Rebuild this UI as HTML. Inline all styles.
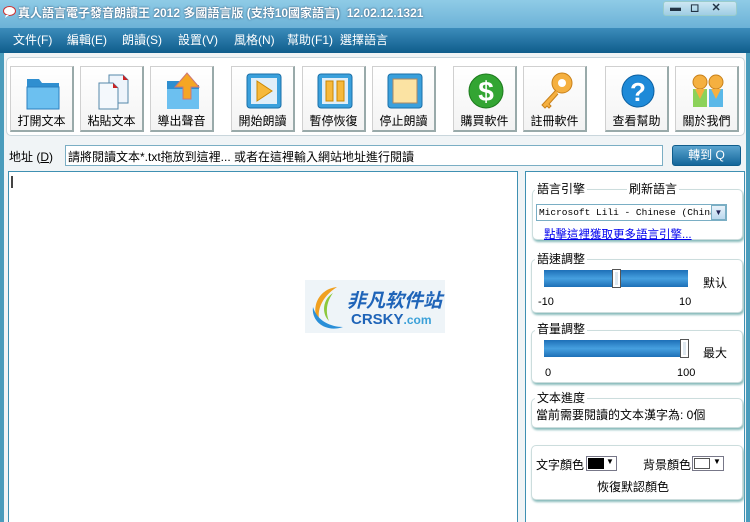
<!DOCTYPE html><html><head><meta charset="utf-8"><style>
*{margin:0;padding:0;box-sizing:border-box}
body{width:750px;height:522px;overflow:hidden;background:#4a9cbc;font-family:"Liberation Sans","Noto Sans CJK TC",sans-serif;font-size:12px;color:#000;position:relative}
.a{position:absolute;white-space:nowrap}
#title{left:0;top:0;width:750px;height:28px;background:linear-gradient(#8fcbe6,#6cb2d7);color:#fff;font-weight:bold;font-size:12px;line-height:26px;padding-left:18px;text-shadow:0 0 2px #246}
#menu{left:0;top:28px;width:750px;height:25px;background:linear-gradient(#3c8cbb,#0f5d8c);color:#fff;font-size:12px;line-height:24px}
#menu span{position:absolute;top:0}
#client{left:4px;top:53px;width:742px;height:469px;background:#f0f4f6}
.tb{left:6px;top:57px;width:739px;height:79px;border:1px solid #c9d6dc;border-radius:5px;background:#fff}
.btn{position:absolute;top:66px;width:64px;height:66px;background:linear-gradient(#fff,#f3f3f3);border:1px solid #d0d0d0;border-right:2px solid #9aa;border-bottom:2px solid #9aa;text-align:center;font-size:12px}
.btn svg{position:absolute;left:14px;top:4px}
.btn b{position:absolute;left:0;right:0;top:45px;font-weight:normal}
.grp{position:absolute;border:1px solid #cdd;border-radius:5px;background:#fff;box-shadow:1px 2px 2px #8bb}
.lbl{position:absolute;background:#fff;padding:0 2px;font-size:12px}
.sl{position:absolute;height:17px;background:linear-gradient(#1d6fb7,#46a0df 50%,#1d6fb7)}
.th{position:absolute;width:9px;height:19px;border:1px solid #555;background:#dfe8ef;box-shadow:inset 0 0 0 2px #fff}
</style></head><body>
<div class="a" id="title"><svg class="a" style="left:3px;top:6px" width="13" height="12"><ellipse cx="6.5" cy="5" rx="6" ry="4.5" fill="#fff" stroke="#c33"/><path d="M3 9 L2 12 L6 9z" fill="#fff"/></svg>真人語言電子發音朗讀王 2012 多國語言版 (支持10國家語言)&nbsp; 12.02.12.1321</div>
<div class="a" style="left:663px;top:1px;width:74px;height:15px;border:1px solid #9cc;border-radius:3px;background:linear-gradient(#cde7f3,#9fcde4)"></div>
<div class="a" style="left:670px;top:1px;color:#234;font-size:11px;font-weight:bold">▬&nbsp;&nbsp;&nbsp;◻&nbsp;&nbsp;&nbsp;&nbsp;✕</div>
<div class="a" id="menu"><span style="left:13px">文件(F)</span><span style="left:67px">編輯(E)</span><span style="left:122px">朗讀(S)</span><span style="left:178px">設置(V)</span><span style="left:234px">風格(N)</span><span style="left:287px">幫助(F1)</span><span style="left:340px">選擇語言</span></div>
<div class="a" id="client"></div>
<div class="a tb"></div>
<div class="btn" style="left:10px"><svg width="36" height="40"><path d="M2 8h12l3 4h17v26H2z" fill="#2f8fd0"/><path d="M2 16h32v22H2z" fill="#6cc0f0" stroke="#2a7fbf"/></svg><b>打開文本</b></div>
<div class="btn" style="left:80px"><svg width="36" height="40"><path d="M14 4h14l5 5v23H14z" fill="#eef4fb" stroke="#5588aa"/><path d="M4 12h14l5 5v21H4z" fill="#f4f8fc" stroke="#5588aa"/><path d="M18 12l5 5h-5z M28 4l5 5h-5z" fill="#c22"/></svg><b>粘貼文本</b></div>
<div class="btn" style="left:150px"><svg width="40" height="40"><path d="M2 10h12l3 4h17v24H2z" fill="#2f8fd0"/><path d="M2 18h32v20H2z" fill="#6cc0f0"/><path d="M16 16h8v12h8V16h8L28 2z" transform="translate(-6 0)" fill="#f5a623" stroke="#c77"/></svg><b>導出聲音</b></div>
<div class="btn" style="left:231px"><svg width="36" height="40"><rect x="1" y="3" width="34" height="34" rx="3" fill="#3aa0dc" stroke="#1a6fa8"/><rect x="5" y="7" width="26" height="26" fill="#e0eef8"/><path d="M11 10l15 10-15 10z" fill="#f6b93b" stroke="#c80"/></svg><b>開始朗讀</b></div>
<div class="btn" style="left:302px"><svg width="36" height="40"><rect x="1" y="3" width="34" height="34" rx="3" fill="#3aa0dc" stroke="#1a6fa8"/><rect x="5" y="7" width="26" height="26" fill="#e0eef8"/><rect x="9" y="10" width="7" height="20" fill="#f6b93b" stroke="#c80"/><rect x="20" y="10" width="7" height="20" fill="#f6b93b" stroke="#c80"/></svg><b>暫停恢復</b></div>
<div class="btn" style="left:372px"><svg width="36" height="40"><rect x="1" y="3" width="34" height="34" rx="3" fill="#3aa0dc" stroke="#1a6fa8"/><rect x="6" y="8" width="24" height="24" fill="#fbe3a3" stroke="#a86"/></svg><b>停止朗讀</b></div>
<div class="btn" style="left:453px"><svg width="40" height="40"><circle cx="18" cy="20" r="17" fill="#33a533" stroke="#1d7a1d"/><text x="18" y="30" font-size="28" font-weight="bold" fill="#fff" text-anchor="middle" font-family="Liberation Sans">$</text></svg><b>購買軟件</b></div>
<div class="btn" style="left:523px"><svg width="40" height="40"><circle cx="24" cy="12" r="10" fill="#f5b040" stroke="#c8801a"/><circle cx="24" cy="12" r="4" fill="#fff"/><path d="M18 19L4 34l3 3 2-2 2 2 2-2-2-2 9-10" fill="#f5b040" stroke="#c8801a"/></svg><b>註冊軟件</b></div>
<div class="btn" style="left:605px"><svg width="40" height="40"><circle cx="18" cy="20" r="16" fill="#1e8ad8" stroke="#0b5fa0"/><text x="18" y="30" font-size="26" font-weight="bold" fill="#fff" text-anchor="middle" font-family="Liberation Sans">?</text></svg><b>查看幫助</b></div>
<div class="btn" style="left:675px"><svg width="40" height="40"><rect x="3" y="18" width="14" height="18" fill="#8cd25a"/><rect x="19" y="18" width="14" height="18" fill="#5ab8e8"/><circle cx="10" cy="11" r="7" fill="#f5b040" stroke="#c8801a"/><circle cx="26" cy="11" r="7" fill="#f5b040" stroke="#c8801a"/><path d="M5 18l5 10 5-10M21 18l5 10 5-10" fill="#f5b040"/></svg><b>關於我們</b></div>
<div class="a" style="left:9px;top:148px">地址 (<u>D</u>)</div>
<div class="a" style="left:65px;top:145px;width:598px;height:21px;border:1px solid #7aaec4;background:#fff;padding:2px 2px;font-size:12px">請將閱讀文本*.txt拖放到這裡... 或者在這裡輸入網站地址進行閱讀</div>
<div class="a" style="left:672px;top:145px;width:69px;height:21px;border:1px solid #0f5d8c;border-radius:3px;background:linear-gradient(#5aa4cf,#14669a);color:#fff;text-align:center;line-height:19px">轉到 Q</div>
<div class="a" style="left:8px;top:171px;width:510px;height:351px;background:#fff;border:1px solid #3f90b2;border-bottom:none"></div>
<div class="a" style="left:11px;top:176px;width:2px;height:12px;background:#444"></div>
<div class="a" style="left:305px;top:280px;width:140px;height:53px;background:#eef4f8"><svg class="a" style="left:2px;top:3px" width="40" height="48"><path d="M30 4C10 6 2 28 14 42 8 30 14 14 30 4z" fill="#f0a020"/><path d="M36 44C18 50 4 38 6 24 10 38 24 44 36 44z" fill="#2a8fd8"/><path d="M26 10C16 16 14 30 22 38 18 28 20 18 26 10z" fill="#8cc83c"/></svg><span class="a" style="left:42px;top:6px;font-size:19px;font-weight:bold;font-style:italic;color:#1f64b8">非凡软件站</span><span class="a" style="left:46px;top:31px;font-size:15px;font-weight:bold;color:#1f64b8">CRSKY<span style="color:#3aa0d8;font-size:12px">.com</span></span></div>
<div class="a" style="left:525px;top:171px;width:220px;height:351px;background:#fff;border:1px solid #3f90b2;border-bottom:none"></div>
<div class="grp" style="left:532px;top:189px;width:211px;height:51px"></div>
<div class="lbl" style="left:535px;top:180px">語言引擎</div><div class="lbl" style="left:627px;top:180px">刷新語言</div>
<div class="a" style="left:536px;top:204px;width:191px;height:17px;border:1px solid #7aaec4;background:#fff;font-family:'Liberation Mono',monospace;font-size:9.5px;line-height:15px;padding-left:2px;overflow:hidden">Microsoft Lili - Chinese (China)</div>
<div class="a" style="left:711px;top:205px;width:15px;height:15px;background:linear-gradient(#e8f2fa,#bcd8ee);border:1px solid #7aaec4;font-size:8px;text-align:center;line-height:13px;color:#225">▼</div>
<div class="a" style="left:544px;top:226px;color:#0000ee;text-decoration:underline;font-size:11.5px">點擊這裡獲取更多語言引擎...</div>
<div class="grp" style="left:531px;top:259px;width:212px;height:54px"></div>
<div class="lbl" style="left:535px;top:250px">語速調整</div>
<div class="sl" style="left:544px;top:270px;width:144px"></div><div class="th" style="left:612px;top:269px"></div>
<div class="a" style="left:703px;top:274px">默认</div>
<div class="a" style="left:538px;top:296px;font-size:11px">-10</div><div class="a" style="left:679px;top:296px;font-size:11px">10</div>
<div class="grp" style="left:531px;top:330px;width:212px;height:53px"></div>
<div class="lbl" style="left:535px;top:320px">音量調整</div>
<div class="sl" style="left:544px;top:340px;width:144px"></div><div class="th" style="left:680px;top:339px"></div>
<div class="a" style="left:703px;top:344px">最大</div>
<div class="a" style="left:545px;top:367px;font-size:11px">0</div><div class="a" style="left:677px;top:367px;font-size:11px">100</div>
<div class="grp" style="left:531px;top:398px;width:212px;height:30px"></div>
<div class="lbl" style="left:535px;top:389px">文本進度</div>
<div class="a" style="left:536px;top:406px">當前需要閱讀的文本漢字為: 0個</div>
<div class="grp" style="left:531px;top:445px;width:212px;height:55px"></div>
<div class="a" style="left:536px;top:456px">文字顏色</div>
<div class="a" style="left:586px;top:456px;width:31px;height:15px;border:1px solid #778;background:#fff"><div class="a" style="left:1px;top:1px;width:16px;height:11px;background:#000"></div><span class="a" style="left:19px;top:0;font-size:8px">▼</span></div>
<div class="a" style="left:643px;top:456px">背景顏色</div>
<div class="a" style="left:692px;top:456px;width:32px;height:15px;border:1px solid #778;background:#fff"><div class="a" style="left:1px;top:1px;width:16px;height:11px;border:1px solid #555"></div><span class="a" style="left:20px;top:0;font-size:8px">▼</span></div>
<div class="a" style="left:597px;top:478px">恢復默認顏色</div>
</body></html>
